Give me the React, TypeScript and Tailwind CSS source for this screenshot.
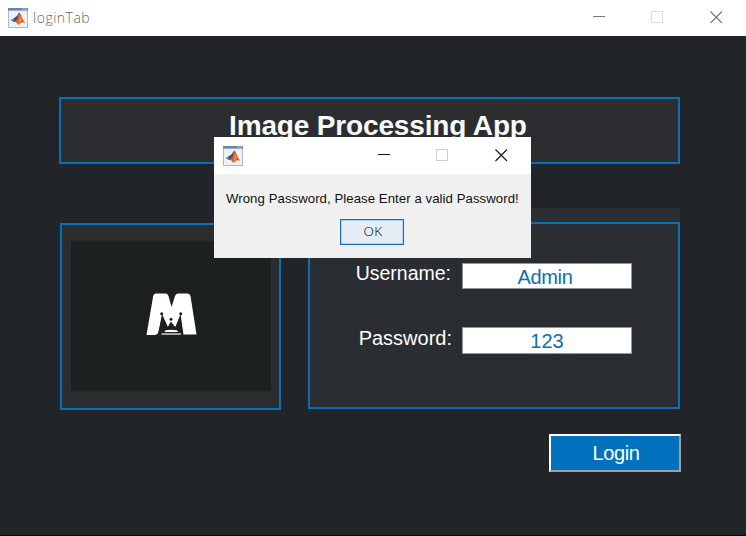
import React from "react";

function MatlabIcon() {
  return (
    <svg width="20" height="20" viewBox="0 0 20 20" className="shrink-0">
      <defs>
        <linearGradient id="peak" x1="0" y1="0" x2="1" y2="1">
          <stop offset="0" stopColor="#a5311f" />
          <stop offset="0.5" stopColor="#e0602a" />
          <stop offset="1" stopColor="#c4401d" />
        </linearGradient>
      </defs>
      <rect x="0.5" y="0.5" width="19" height="19" fill="#eef0f5" stroke="#b0b6c2" />
      <rect x="0" y="0" width="20" height="2.6" fill="#6484a8" />
      <rect x="14" y="0.5" width="5" height="1.3" fill="#a2b6cd" />
      <path d="M2.5 12 L6.5 9.8 L8.5 12 L5.8 14Z" fill="#4c86b5" />
      <path d="M6.3 10 Q8.8 9 11.2 4.6 L10.3 10 L7.3 13.8 L5.8 14Z" fill="#33506f" />
      <path d="M11.2 4.4 Q12.8 5.4 14 9.5 Q15.4 13.4 17.6 15 Q15 13.6 13.4 14.6 Q11.8 15.6 10.2 17 Q8.8 14 7.2 14 Q9.8 11 11.2 4.4Z" fill="url(#peak)" />
      <path d="M11.3 6.5 Q12 10 10.5 15.5 Q12.5 13 14 12.6Z" fill="#f59a35" />
    </svg>
  );
}

function Controls({ color, disabled }: { color: string; disabled: string }) {
  return (
    <svg width="130" height="14" viewBox="0 0 130 14" fill="none" shapeRendering="crispEdges">
      <path d="M0 6.5H12" stroke={color} />
      <rect x="58.5" y="1.5" width="11" height="11" stroke={disabled} />
      <path d="M117.5 1.5L129 13M129 1.5L117.5 13" stroke={color} strokeWidth="1.1" shapeRendering="auto" />
    </svg>
  );
}

function Logo() {
  return (
    <svg width="52" height="48" viewBox="0 0 52 48">
      <path d="M7 4Q7.5 0.5 10 0.5H20Q21.5 0.5 22.5 3L25.5 14L29 3Q29.8 0.5 32 0.5H41.5Q44 0.5 44.5 3L50.5 41.5H37L34.5 24L30 36H21.5L16 24L12.5 39Q12 41.5 9 42H0.5Z" fill="#fff" />
      <path d="M16 21L22 34L25 27L29.5 34L34.5 21L37.5 42H12Z" fill="#1c2020" />
      <path d="M16.2 24L21 34.5L24.8 29L29.2 34.5L34 24L32.8 36.5H18.2Z" fill="#1c2020" />
      <path d="M17.5 22L22 33.5L24.9 28.5L28.8 33.5L33 22L29 22L25 18L21 22Z" fill="#fff" />
      <circle cx="15.7" cy="20.8" r="1.5" fill="#1c2020" />
      <circle cx="34.7" cy="20.8" r="1.5" fill="#1c2020" />
      <circle cx="25" cy="26.3" r="1.5" fill="#1c2020" />
      <path d="M19.5 37.2Q25 36.2 31 37.2L32 39H18.5Z" fill="#fff" />
      <path d="M15.5 41H35" stroke="#fff" strokeWidth="1.2" />
    </svg>
  );
}

export default function App() {
  return (
    <div className="relative flex h-[536px] w-[746px] flex-col overflow-hidden border-b border-[#09080a] bg-[#212529] font-['Liberation_Sans',Arial,sans-serif]">
      <header className="flex h-9 shrink-0 items-center bg-white pl-2 pr-[23px]">
        <MatlabIcon />
        <span className="ml-[5px] font-['Open_Sans',sans-serif] text-[14px] font-light leading-5 tracking-[0.5px] text-[#666]">loginTab</span>
        <div className="ml-auto -mt-0.5"><Controls color="#777" disabled="#dedede" /></div>
      </header>

      <section className="ml-[59px] mt-[61px] h-[67px] w-[621px] shrink-0 border-2 border-[#0870b5] bg-[#2b2d31] pt-[11px] pl-[168px]">
        <h1 className="whitespace-nowrap text-[28px] font-bold leading-8 tracking-[-0.15px] text-[#f8fafc]">Image Processing App</h1>
      </section>

      <main className="mt-11 flex h-[202px] shrink-0 items-start pl-[60px]">
        <section className="mt-[15px] h-[187px] w-[221px] border-2 border-[#0870b5] bg-[#2b2e31] pl-[9px] pt-4">
          <div className="flex h-[150px] w-[200px] items-start bg-[#1c2020] pl-[75px] pt-[52px]">
            <Logo />
          </div>
        </section>
        <section className="ml-[27px] w-[372px] bg-[#2a2d32] pt-3.5">
          <div className="h-[187px] border-2 border-[#0870b5] pr-[46px] pt-[39px]">
            <div className="flex items-start justify-end">
              <label className="mr-[11px] whitespace-nowrap text-[19.5px] leading-5 text-white">Username:</label>
              <div className="flex h-[26px] w-[170px] items-center justify-center border border-[#8f989c] bg-white pb-px pr-1 pt-0.5 text-[20px] leading-5 tracking-[-0.3px] text-[#0870b5]">Admin</div>
            </div>
            <div className="mt-[38px] flex items-start justify-end">
              <label className="mr-2.5 mt-px whitespace-nowrap text-[20px] leading-5 text-white">Password:</label>
              <div className="flex h-[27px] w-[170px] items-center justify-center border border-[#8f989c] bg-white pb-px pt-0.5 text-[20px] leading-5 text-[#0870b5]">123</div>
            </div>
          </div>
        </section>
      </main>

      <button className="ml-[549px] mt-6 h-[38px] w-[132px] shrink-0 border-2 border-b-[#a0a0a0] border-l-white border-r-[#a0a0a0] border-t-white bg-[#0072bd] pl-0.5 text-[20px] leading-5 tracking-[-0.4px] text-white">Login</button>

      <div role="dialog" className="absolute left-[214px] top-[137px] flex h-[121px] w-[317px] flex-col bg-[#f0f0f0]">
        <div className="flex h-[37px] shrink-0 items-center bg-white pl-[9px] pr-[23px]">
          <MatlabIcon />
          <div className="ml-auto -mt-px"><Controls color="#111" disabled="#cecece" /></div>
        </div>
        <p className="ml-3 mt-4 whitespace-nowrap text-[13.2px] leading-[18px] tracking-[0.06px] text-[#111]">Wrong Password, Please Enter a valid Password!</p>
        <button className="ml-[126px] mt-[11px] flex h-[26px] w-[64px] items-center justify-center border border-[#176eb8] bg-[#e4ecf6] pb-0.5 pl-0.5 font-['Open_Sans',sans-serif] text-[13.5px] font-light tracking-[0.5px] text-black shadow-[inset_0_0_0_1px_#afd4f2]">OK</button>
      </div>
    </div>
  );
}
